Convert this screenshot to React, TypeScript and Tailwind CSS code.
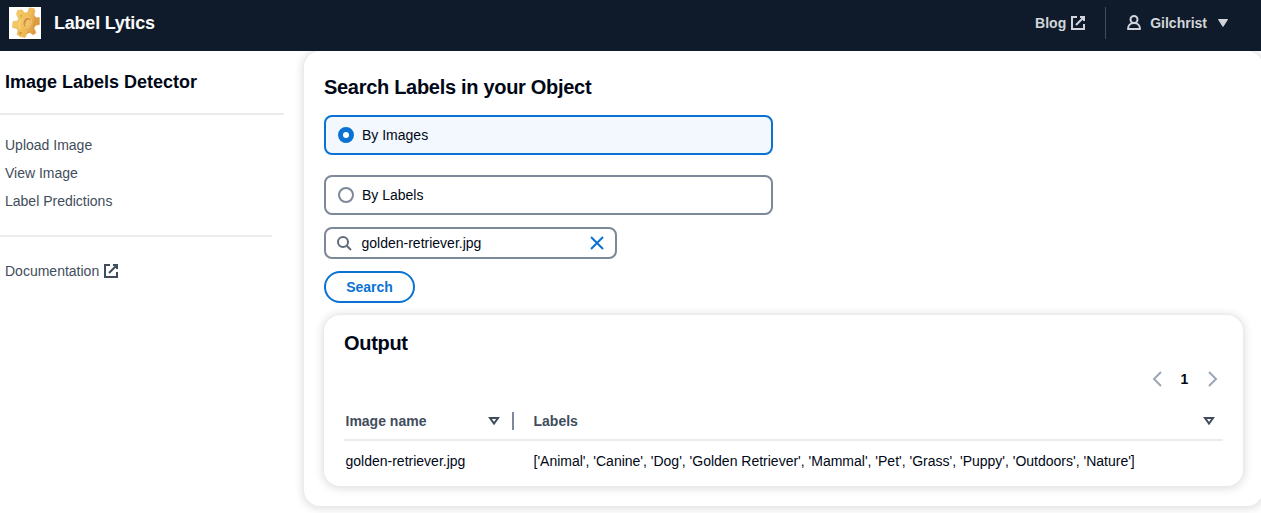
import type { ReactNode } from "react";

function ExternalIcon({ className = "" }: { className?: string }) {
  return (
    <svg viewBox="0 0 16 16" className={`h-4 w-4 shrink-0 fill-none stroke-current stroke-2 ${className}`}>
      <path d="M10 2h4v4M6 10l8-8M14 9.05V14H2V2h5" />
    </svg>
  );
}

function UserIcon() {
  return (
    <svg viewBox="0 0 16 16" className="h-4 w-4 shrink-0 fill-none stroke-current stroke-2" strokeLinejoin="round">
      <circle cx="8" cy="4.500" r="3.500" />
      <path d="M2 14c0-3.500 2.400-6 6-6s6 2.500 6 6z" />
    </svg>
  );
}

function GearLogo() {
  return (
    <svg viewBox="0 0 32 32" className="h-8 w-8 shrink-0 bg-white">
      <defs>
        <linearGradient id="gear" x1="0" y1="0.3" x2="1" y2="0.7">
          <stop offset="0" stopColor="#f5cf68" />
          <stop offset="0.55" stopColor="#eebb55" />
          <stop offset="1" stopColor="#d48a3a" />
        </linearGradient>
      </defs>
      <path
        d="M8.500 3.500L13 2.700L15.500 6L18.500 5.500L20.500 .8L25 1.500L26 4L25 8L26.500 10.500L30.500 10.500V17.500L26.500 18.500L25 21L27 25.500L24.500 28L20.500 25.500L18 26.500L16 30.500L11 29.500L8 27.500L9 23.500L7.500 21.500L3.500 20.500L4 14.500L8.500 14L9.500 11.500L7.500 7.500Z"
        fill="url(#gear)"
        stroke="#e5ab57"
        strokeWidth="0.5"
        strokeLinejoin="round"
      />
      <path d="M11.500 8l2-.500-2 4zM9.500 24.500l4 1-2.500 3z" fill="#c98034" opacity="0.6" />
      <path d="M25 8.500l1.500 2.500-1 7-2 3M21 25l-3 1" fill="none" stroke="#c98034" strokeWidth="1" opacity="0.5" />
      <path d="M12 12.500l-2 5 1.500 5" fill="none" stroke="#f9df8b" strokeWidth="1.200" opacity="0.7" />
      <ellipse cx="18.200" cy="15.500" rx="4.200" ry="5.400" transform="rotate(20 18.200 15.500)" fill="#d98f3a" stroke="#f7d583" strokeWidth="0.7" />
      <ellipse cx="18.900" cy="16.300" rx="2.600" ry="3.900" transform="rotate(20 18.900 16.300)" fill="#f0c46c" />
    </svg>
  );
}

function SortIcon() {
  return (
    <svg viewBox="0 0 16 16" className="h-4 w-4 shrink-0 fill-none stroke-[#414d5c] stroke-2">
      <path d="M4 5h8l-4 5.500z" />
    </svg>
  );
}

function RadioTile({ checked, children }: { checked?: boolean; children: ReactNode }) {
  return (
    <div
      className={`flex h-10 w-[449px] items-center gap-2 rounded-lg border-2 px-3 ${
        checked ? "border-[#0972d3] bg-[#f2f8fd]" : "border-[#7d8998] bg-white"
      }`}
    >
      <span
        className={`h-4 w-4 rounded-full bg-white ${
          checked ? "border-[5px] border-[#0972d3]" : "border-2 border-[#7d8998]"
        }`}
      />
      <span>{children}</span>
    </div>
  );
}

export default function App() {
  return (
    <div className="flex h-[513px] w-full flex-col overflow-hidden bg-white font-['Liberation_Sans',Arial,sans-serif] text-sm leading-5 text-[#000716]">
      <header className="z-10 flex h-[51px] shrink-0 items-center bg-[#0f1b2a] pb-[5px] pl-[9px] text-[#d1d5db]">
        <GearLogo />
        <span className="ml-[13px] text-lg font-bold tracking-[-0.22px] text-[#fbfbfb]">Label Lytics</span>
        <div className="ml-auto flex items-center font-bold">
          <span>Blog</span>
          <ExternalIcon className="ml-1" />
          <span className="ml-[19px] h-8 w-px bg-[#414d5c]" />
          <span className="ml-5"><UserIcon /></span>
          <span className="ml-2">Gilchrist</span>
          <svg viewBox="0 0 16 16" className="ml-2 mr-[30px] h-4 w-4 fill-current">
            <path d="M3.500 4.500h9l-4.500 7z" stroke="currentColor" strokeWidth="1" strokeLinejoin="round" />
          </svg>
        </div>
      </header>
      <div className="flex flex-1">
        <nav className="w-[304px] shrink-0 text-[#414d5c]">
          <h2 className="pl-[5px] pt-5 text-lg leading-[22px] font-bold text-[#000716]">Image Labels Detector</h2>
          <div className="mt-5 h-0.5 w-[284px] bg-[#e9ebed]" />
          <ul className="flex flex-col gap-2 pl-[5px] pt-5">
            <li>Upload Image</li>
            <li>View Image</li>
            <li>Label Predictions</li>
          </ul>
          <div className="mt-6 h-0.5 w-[272px] bg-[#e9ebed]" />
          <div className="mt-6 flex items-center gap-1 pl-[5px]">
            Documentation <ExternalIcon />
          </div>
        </nav>
        <main className="h-[455px] w-[959px] shrink-0 rounded-2xl bg-white px-5 pt-6 shadow-[0_0_1px_1px_#e9ebed,0_1px_8px_2px_rgba(0,7,22,0.12)]">
          <h1 className="text-xl leading-6 font-bold tracking-[-0.3px]">Search Labels in your Object</h1>
          <div className="mt-4 flex flex-col gap-5">
            <RadioTile checked>By Images</RadioTile>
            <RadioTile>By Labels</RadioTile>
          </div>
          <div className="mt-3 flex h-8 w-[293px] items-center rounded-lg border-2 border-[#7d8998] pl-2.5 pr-2.5">
            <svg viewBox="0 0 16 16" className="h-4 w-4 fill-none stroke-[#5f6b7a] stroke-2">
              <circle cx="7" cy="7" r="5" />
              <path d="m15 15-4.500-4.500" />
            </svg>
            <span className="ml-[9.500px]">golden-retriever.jpg</span>
            <svg viewBox="0 0 16 16" className="ml-auto h-4 w-4 fill-none stroke-[#0972d3] stroke-2">
              <path d="m2 2 12 12M14 2 2 14" />
            </svg>
          </div>
          <button className="mt-3 flex h-8 w-[91px] items-center justify-center rounded-full border-2 border-[#0972d3] font-bold text-[#0972d3]">
            Search
          </button>
          <section className="mt-3 h-[171px] w-[919px] rounded-2xl bg-white px-5 pt-4 shadow-[0_0_1px_1px_#e9ebed,0_1px_8px_2px_rgba(0,7,22,0.12)]">
            <h2 className="text-xl leading-6 font-bold tracking-[-0.3px]">Output</h2>
            <div className="mt-[14px] flex h-5 items-center justify-end pr-[3px] font-bold">
              <svg viewBox="0 0 16 16" className="h-4 w-4 fill-none stroke-[#9ba7b6] stroke-2">
                <path d="m13 1-7 7 7 7" />
              </svg>
              <span className="w-10 pl-px text-center">1</span>
              <svg viewBox="0 0 16 16" className="h-4 w-4 fill-none stroke-[#9ba7b6] stroke-2">
                <path d="m5 1 7 7-7 7" />
              </svg>
            </div>
            <div className="mt-[22px] flex h-[30px] items-start border-b-2 border-[#e9ebed] pl-[1.500px] font-bold text-[#414d5c]">
              <div className="flex w-[167.500px] items-center justify-between pr-[11px]">
                Image name
                <SortIcon />
              </div>
              <span className="mt-px -ml-px h-[18px] w-0.5 bg-[#7d8998]" />
              <div className="ml-[19.500px] flex flex-1 items-center justify-between pr-1.5">
                Labels
                <SortIcon />
              </div>
            </div>
            <div className="flex pl-[1.500px] pt-2.5">
              <span className="w-[188px] shrink-0">golden-retriever.jpg</span>
              <span className="whitespace-nowrap">
                ['Animal', 'Canine', 'Dog', 'Golden Retriever', 'Mammal', 'Pet', 'Grass', 'Puppy', 'Outdoors', 'Nature']
              </span>
            </div>
          </section>
        </main>
      </div>
    </div>
  );
}
